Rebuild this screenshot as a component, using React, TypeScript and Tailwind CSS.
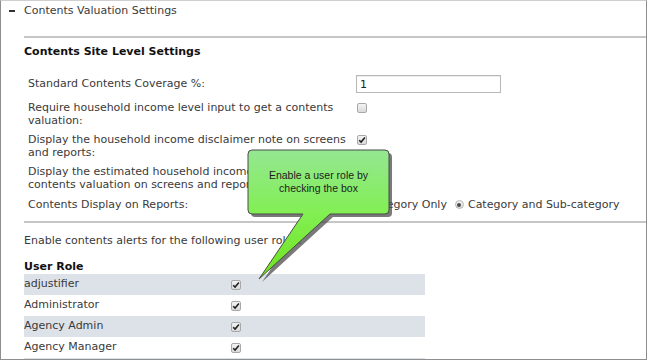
import React from 'react'

const font = { fontFamily: '"DejaVu Sans", Verdana, sans-serif' }

function Check({ checked = false }: { checked?: boolean }) {
  return (
    <span className="flex h-[10px] w-[10px] items-center justify-center rounded-[2px] border border-[#a8a8a8] bg-gradient-to-b from-[#f4f4f4] to-[#dadada]">
      {checked && (
        <svg width="8" height="8" viewBox="0 0 8 8">
          <path d="M1.2 4.2 L3.1 6.1 L6.9 1.6" fill="none" stroke="#222" strokeWidth="1.6" />
        </svg>
      )}
    </span>
  )
}

function Radio({ checked = false }: { checked?: boolean }) {
  return (
    <span className="flex h-[9px] w-[9px] items-center justify-center rounded-full border border-[#b4b4b4] bg-gradient-to-b from-[#f6f6f6] to-[#dedede]">
      {checked && <span className="h-[4px] w-[4px] rounded-full bg-[#4a4a4a]" />}
    </span>
  )
}

const roles = ['adjustifier', 'Administrator', 'Agency Admin', 'Agency Manager', 'Agent']

function Callout() {
  return (
    <>
      <svg className="absolute left-0 top-0" width="647" height="360" viewBox="0 0 647 360">
        <defs>
          <linearGradient id="cg" x1="0" y1="149" x2="0" y2="278" gradientUnits="userSpaceOnUse">
            <stop offset="0" stopColor="#94e792" />
            <stop offset="0.5" stopColor="#82ef52" />
            <stop offset="1" stopColor="#6fe21c" />
          </linearGradient>
        </defs>
        <path
          d="M251 149 H384 Q388 149 388 153 V209 Q388 213 384 213 H329 L258 278 L302 213 H251 Q247 213 247 209 V153 Q247 149 251 149 Z"
          fill="#4d4d4d"
          opacity="0.75"
          transform="translate(3 3)"
        />
        <path
          d="M251 149 H384 Q388 149 388 153 V209 Q388 213 384 213 H329 L258 278 L302 213 H251 Q247 213 247 209 V153 Q247 149 251 149 Z"
          fill="url(#cg)"
          stroke="#4a4a4a"
          strokeWidth="1"
        />
      </svg>
      <div
        className="absolute left-[247px] top-[149px] flex h-[64px] w-[141px] items-center justify-center text-center text-[10.5px] leading-[13px] text-[#1c1c1c]"
        style={{ fontFamily: '"Liberation Sans", Arial, sans-serif' }}
      >
        Enable a user role by
        <br />
        checking the box
      </div>
    </>
  )
}

export default function App() {
  return (
    <div
      className="relative h-[360px] w-[647px] overflow-hidden border border-[#8e8e8e] border-t-[#cfcfcf] bg-white text-[11px] text-[#3a3a3a]"
      style={font}
    >
      <div className="flex h-[20px] items-center pl-[8px]">
        <span className="mr-[9px] h-[2px] w-[6px] bg-[#333]" />
        <span>Contents Valuation Settings</span>
      </div>

      <div className="pl-[23px]">
        <div className="mt-[15px] h-[2px] bg-[#c6c6c6]" />
        <h3 className="mt-[6px] text-[11px] font-bold leading-[16px] text-[#111]">Contents Site Level Settings</h3>

        <div className="pl-[4px]">
          <div className="mt-[15px] flex h-[18px] items-center">
            <span className="w-[328px]">Standard Contents Coverage %:</span>
            <input
              readOnly
              value="1"
              className="h-[18px] w-[145px] border border-[#b8b8b8] px-[3px] text-[11px] text-[#222] shadow-[inset_0_1px_1px_rgba(0,0,0,0.08)]"
              style={font}
            />
          </div>

          <div className="mt-[8px] flex items-start leading-[13px]">
            <span className="w-[329px] whitespace-nowrap">
              Require household income level input to get a contents
              <br />
              valuation:
            </span>
            <span className="pt-[2px]">
              <Check />
            </span>
          </div>

          <div className="mt-[6px] flex items-start leading-[13px]">
            <span className="w-[329px] whitespace-nowrap">
              Display the household income disclaimer note on screens
              <br />
              and reports:
            </span>
            <span className="pt-[2px]">
              <Check checked />
            </span>
          </div>

          <div className="mt-[6px] flex items-start leading-[13px]">
            <span className="w-[329px] whitespace-nowrap">
              Display the estimated household income with the
              <br />
              contents valuation on screens and reports:
            </span>
            <span className="pt-[2px]">
              <Check checked />
            </span>
          </div>

          <div className="mt-[7px] flex items-center leading-[13px]">
            <span className="w-[328px]">Contents Display on Reports:</span>
            <span className="flex items-center gap-[3px]">
              <Radio />
              <span>Category Only</span>
            </span>
            <span className="ml-[8px] flex items-center gap-[4px]">
              <Radio checked />
              <span>Category and Sub-category</span>
            </span>
          </div>
        </div>

        <div className="mt-[10px] h-[2px] bg-[#c6c6c6]" />

        <p className="mt-[11px] leading-[13px]">Enable contents alerts for the following user roles:</p>
        <p className="mt-[13px] font-bold leading-[13px] text-[#111]">User Role</p>

        <div className="mt-[1px] w-[401px]">
          {roles.map((r, i) => (
            <div key={r} className={`flex h-[21px] items-center ${i % 2 === 0 ? 'bg-[#dce2e8]' : 'bg-white'}`}>
              <span className="w-[207px]">{r}</span>
              <Check checked />
            </div>
          ))}
        </div>
      </div>

      <Callout />
    </div>
  )
}
